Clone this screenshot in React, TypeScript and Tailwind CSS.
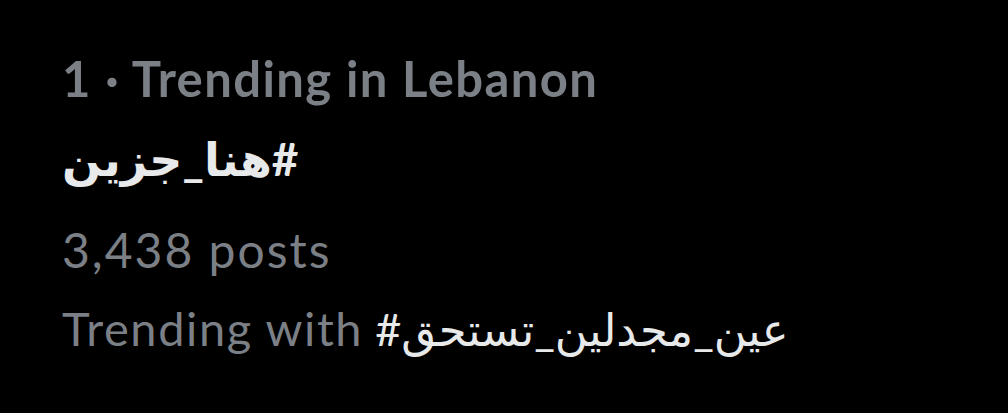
export default function App() {
  const font = { fontFamily: 'Lato, "Noto Sans", "DejaVu Sans", sans-serif' }

  return (
    <div className="w-[1008px] h-[413px] bg-black overflow-hidden" style={font}>
      <div className="flex flex-col pl-[62px] pt-[50px]">
        <div className="text-[49px] leading-[56px] font-bold tracking-[1.4px] text-[#7b7f86]">
          1 · Trending in Lebanon
        </div>
        <div className="mt-[23px] text-[46px] leading-[60px] font-bold text-[#e7e9ea]">
          <bdi dir="rtl">#هنا_جزين</bdi>
        </div>
        <div className="mt-[33px] text-[48px] leading-[56px] tracking-[2px] text-[#7b7f86]">
          3,438 posts
        </div>
        <div className="mt-[22px] text-[47px] leading-[56px] text-[#7b7f86]">
          <span className="tracking-[1.6px]">Trending with</span>{' '}
          <span className="text-[45px] text-[#e7e9ea]">#عين_مجدلين_تستحق</span>
        </div>
      </div>
    </div>
  )
}
